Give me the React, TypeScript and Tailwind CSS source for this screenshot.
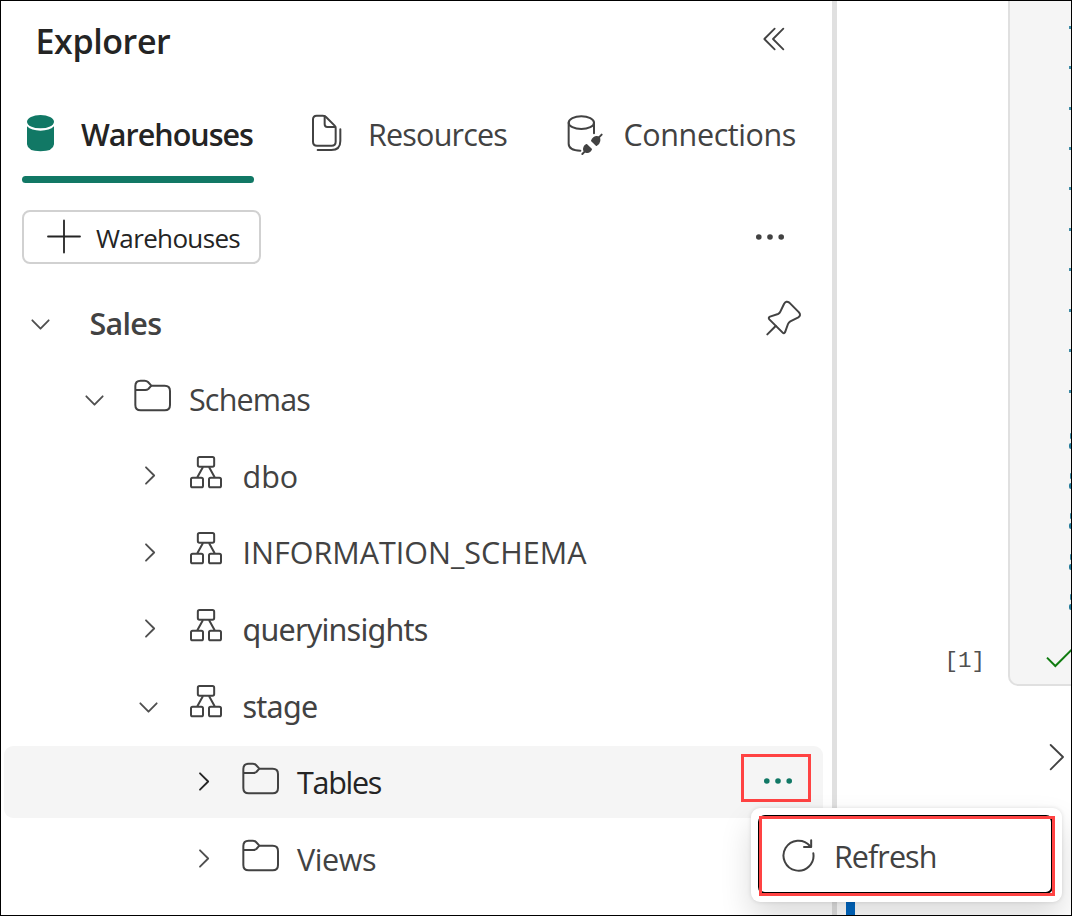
import type { ReactNode } from "react";

const OPEN = "font-['Open_Sans','Noto_Sans',sans-serif]";
const NOTO = "font-['Noto_Sans','Open_Sans',sans-serif]";

function Chevron({ open, strong }: { open?: boolean; strong?: boolean }) {
  return (
    <svg
      className={`h-[21px] w-[21px] shrink-0 ${strong ? "text-[#242424]" : "text-[#4f4f4f]"}`}
      viewBox="0 0 63 63"
      fill="none"
      stroke="currentColor"
      strokeWidth="5.5"
      strokeLinecap="round"
      strokeLinejoin="round"
    >
      {open ? <path d="M7 25 L31.5 50 L56 25" /> : <path d="M24 7 L48.5 31.5 L24 56" />}
    </svg>
  );
}

function FolderIcon() {
  return (
    <svg className="-mt-[6px] h-[34px] w-[38px] shrink-0" viewBox="401 266 114 102" fill="none" stroke="#424242" strokeWidth="6" strokeLinejoin="round">
      <path d="M405 300 V287 Q405 271 421 271 H433 Q439 271 443 275 L453 286 H493 Q509 286 509 302 V344 Q509 360 493 360 H421 Q405 360 405 344 Z" />
      <path d="M405 299 H435 Q440 299 444 296 L453 286" />
    </svg>
  );
}

function SchemaIcon() {
  return (
    <svg className="-mt-[8px] h-[34px] w-[32px] shrink-0" viewBox="572 493 96 102" fill="none" stroke="#424242" strokeWidth="6">
      <rect x="595.500" y="499" width="49" height="29" rx="5" />
      <rect x="575" y="561" width="36" height="29" rx="5" />
      <rect x="629" y="561" width="36" height="29" rx="5" />
      <path d="M611 529 L594 560 M629 529 L646 560" />
    </svg>
  );
}

function PinIcon() {
  return (
    <svg className="h-[36px] w-[36px]" viewBox="137 898 108 108" fill="none" stroke="#424242" strokeWidth="6" strokeLinecap="round" strokeLinejoin="round">
      <path d="M191 910 Q197 899 207 906 L236 935 Q243 944 234 950 L210 962 Q205 965 203 970 L194 995 Q191 1000 187 996 L147 956 Q143 951 149 948 L173 940 Q178 938 180 933 Z" />
      <path d="M166 976 L141 1001" />
    </svg>
  );
}

function Dots({ color }: { color: string }) {
  return (
    <svg className={`h-[8px] w-[30px] ${color}`} viewBox="0 0 30 8" fill="currentColor">
      <circle cx="3.800" cy="4" r="2.800" />
      <circle cx="15" cy="4" r="2.800" />
      <circle cx="26.200" cy="4" r="2.800" />
    </svg>
  );
}

type RowProps = {
  pad: string;
  open?: boolean;
  icon?: ReactNode;
  label: string;
  labelClass: string;
  selected?: boolean;
  children?: ReactNode;
};

function Row({ pad, open, icon, label, labelClass, selected, children }: RowProps) {
  return (
    <div className={`flex h-[72px] w-[819px] shrink-0 items-center rounded-[9px] ${pad} ${selected ? "bg-[#f5f5f5] text-[#242424]" : "text-[#424242]"}`}>
      <Chevron open={open} strong={selected} />
      {icon}
      <span className={`mt-px text-[30.5px] whitespace-nowrap ${labelClass}`}>{label}</span>
      {children}
    </div>
  );
}

function Tree() {
  const folder = <div className="mr-[17px] ml-[29px] flex"><FolderIcon /></div>;
  const schema = <div className="mr-[20.500px] ml-[31px] flex"><SchemaIcon /></div>;
  return (
    <div className="mt-[22.400px] ml-[3px] flex shrink-0 flex-col gap-[4.600px]">
      <Row pad="pl-[26px]" open label="Sales" labelClass={`${OPEN} ml-[38.500px] font-semibold tracking-[-0.7px]`}>
        <div className="mr-[21.500px] -mt-[9px] ml-auto"><PinIcon /></div>
      </Row>
      <Row pad="pl-[80px]" open icon={folder} label="Schemas" labelClass={`${OPEN} tracking-[-0.85px]`} />
      <Row pad="pl-[134px]" icon={schema} label="dbo" labelClass={OPEN} />
      <Row pad="pl-[134px]" icon={schema} label="INFORMATION_SCHEMA" labelClass={OPEN} />
      <Row pad="pl-[134px]" icon={schema} label="queryinsights" labelClass={`${NOTO} tracking-[-0.8px]`} />
      <Row pad="pl-[134px]" open icon={schema} label="stage" labelClass={`${NOTO} tracking-[-0.75px]`} />
      <Row pad="pl-[188px]" icon={folder} label="Tables" labelClass={`${OPEN} tracking-[-1.3px]`} selected>
        <div className="mr-[12px] mb-[8px] ml-auto flex h-[48px] w-[70px] items-center justify-center border-[3px] border-[#ff4343] pt-[7px] pl-[4px]">
          <Dots color="text-[#117865]" />
        </div>
      </Row>
      <Row pad="pl-[188px]" icon={folder} label="Views" labelClass={`${OPEN} tracking-[-0.4px]`} />
      <Row pad="pl-[188px]" icon={folder} label="" labelClass="" />
    </div>
  );
}

function Tabs() {
  return (
    <div className="mt-[19px] flex h-[83px] shrink-0 pl-[21px]">
      <div className="flex w-[232px] flex-col">
        <div className="flex h-[76px] items-center pb-[11px] text-[#242424]">
          <svg className="ml-[4px] h-[38px] w-[29px] shrink-0" viewBox="78 343 87 114" fill="#117865">
            <ellipse cx="121.500" cy="366" rx="40.500" ry="20" />
            <path d="M81 380 Q94 393 121.500 393 Q149 393 162 380 V434 Q160 455 121.500 455 Q83 455 81 434 Z" />
          </svg>
          <span className={`${OPEN} mt-[4px] ml-[26px] text-[30.5px] font-semibold tracking-[-1px] whitespace-nowrap`}>Warehouses</span>
        </div>
        <div className="h-[7px] rounded-full bg-[#117865]" />
      </div>
      <div className="ml-[57px] flex h-[76px] items-center pb-[11px] text-[#424242]">
        <svg className="mt-px h-[38px] w-[32px] shrink-0" viewBox="63 73 96 114" fill="none" stroke="#424242" strokeWidth="6" strokeLinejoin="round" strokeLinecap="round">
          <path d="M80 78 H99 Q104 78 108 82 L134 108 Q137 111 137 116 V156 Q137 168 125 168 H81 Q69 168 69 156 V89 Q69 78 80 78 Z" />
          <path d="M104 79 V104 Q104 112 112 112 H136" />
          <path d="M151 119 V154 Q151 181 124 181 H83" />
        </svg>
        <span className={`${OPEN} mt-[4px] ml-[25px] text-[30.5px] tracking-[-0.8px] whitespace-nowrap`}>Resources</span>
      </div>
      <div className="ml-auto flex h-[76px] items-center pb-[11px] text-[#424242]">
        <svg className="-mb-[4px] h-[42px] w-[38px] shrink-0" viewBox="831 71 114 126" fill="none" stroke="#424242" strokeWidth="6" strokeLinecap="round">
          <ellipse cx="874" cy="97" rx="38" ry="19" />
          <path d="M836 97 V160 Q836 180 871 181 M912 97 V129" />
          <path d="M877 191 L884 184 M935 133 L927 141" />
          <path d="M905 151 L919 165 Q928 160 929 152 Q931 139 919 139 Q909 141 905 151 Z M890 163 L904 177 Q900 187 890 186 Q881 184 881 176 Q882 166 890 163 Z" fill="#424242" strokeWidth="4" strokeLinejoin="round" />
        </svg>
        <span className={`${OPEN} mt-[4px] mr-[36px] ml-[19px] text-[30.5px] tracking-[-0.4px] whitespace-nowrap`}>Connections</span>
      </div>
    </div>
  );
}

function Explorer() {
  return (
    <aside className="flex h-full w-[831px] shrink-0 flex-col overflow-hidden bg-white">
      <header className="flex h-[80px] shrink-0 items-center justify-between pr-[45px] pl-[34.500px] text-[#242424]">
        <h1 className={`${OPEN} text-[34px] font-semibold tracking-[-0.4px]`}>Explorer</h1>
        <svg className="-mt-[4px] h-[26px] w-[26px]" viewBox="123 78 78 78" fill="none" stroke="#424242" strokeWidth="5.500" strokeLinecap="round" strokeLinejoin="round">
          <path d="M164 86 L133 117 L164 148 M190 86 L159 117 L190 148" />
        </svg>
      </header>
      <Tabs />
      <div className="mt-[27px] flex h-[54px] shrink-0 items-center pr-[47.500px] pl-[21px]">
        <button className="flex h-[54px] w-[239px] items-center rounded-[8px] border-2 border-[#d1d1d1] bg-white text-[#242424]">
          <svg className="ml-[22px] h-[36px] w-[36px] shrink-0" viewBox="0 0 36 36" stroke="#242424" strokeWidth="1.800" strokeLinecap="round">
            <path d="M18 1.500 V33.500 M2 17.500 H34" />
          </svg>
          <span className={`${OPEN} mt-[2px] ml-[14px] text-[26px] tracking-[-0.65px] whitespace-nowrap`}>Warehouses</span>
        </button>
        <div className="ml-auto flex"><Dots color="text-[#424242]" /></div>
      </div>
      <Tree />
    </aside>
  );
}

const ones = Array.from({ length: 10 }, (_, i) => i);
const eights = Array.from({ length: 5 }, (_, i) => i);

function Notebook() {
  return (
    <main className="flex h-full flex-1 flex-col overflow-hidden bg-white">
      <div className="flex h-[685px] shrink-0">
        <div className="flex w-[171px] items-end justify-end pr-[23px] pb-[14px]">
          <span className="font-['Liberation_Mono',monospace] text-[22.5px] text-[#505050]">[1]</span>
        </div>
        <div className="flex flex-1 flex-col rounded-bl-[10px] border-b-2 border-l-2 border-[#e0e0e0] bg-[#f5f5f5]">
          <div className="flex h-[646px] shrink-0 flex-col items-end overflow-hidden pt-[6px]">
            {ones.map((i) => (
              <div key={i} className="flex h-[40.440px] w-[2px] shrink-0 items-center">
                <div className="h-[3px] w-[2px] bg-[#3e8ba6]" />
              </div>
            ))}
            {eights.map((i) => (
              <div key={i} className="flex h-[40.440px] w-[2px] shrink-0 flex-col items-end justify-center gap-[4px] pt-[18px]">
                <div className="h-[6px] w-[1px] rounded-l-full bg-[#3e8ba6]" />
                <div className="h-[6px] w-[2px] rounded-l-full bg-[#267c9b]" />
              </div>
            ))}
          </div>
          <svg className="ml-auto h-[22px] w-[27px] shrink-0" viewBox="336 800 81 66" fill="none" stroke="#107c10" strokeWidth="6">
            <path d="M345 832 L370 857 L420 807" />
          </svg>
        </div>
      </div>
      <div className="mt-[56px] flex shrink-0 justify-end pr-[5px]">
        <svg className="h-[30px] w-[18px]" viewBox="978 20 54 90" fill="none" stroke="#424242" strokeWidth="5.500" strokeLinecap="round" strokeLinejoin="round">
          <path d="M986 29 L1023 65 L986 102" />
        </svg>
      </div>
      <div className="mt-auto ml-[9px] h-[20px] w-[9px] bg-[#0067c0]" />
    </main>
  );
}

function ContextMenu() {
  return (
    <div className="absolute top-[807px] left-[750px] h-[94px] w-[311px] rounded-[9px] bg-white p-[7px] shadow-[0_0_4px_rgba(0,0,0,0.12),0_16px_32px_rgba(0,0,0,0.14)]">
      <div className="relative flex h-[79px] w-[295px] items-center rounded-[7px] border-2 border-black text-[#424242]">
        <svg className="ml-[21px] h-[36px] w-[36px] shrink-0" viewBox="177 304 108 108" fill="none" stroke="#424242" strokeWidth="6" strokeLinecap="round" strokeLinejoin="round">
          <path d="M274 353 A45 45 0 1 1 264 331" />
          <path d="M267.500 314 V334 H246" />
        </svg>
        <span className={`${OPEN} mt-[4px] ml-[17px] text-[30.5px] tracking-[-0.95px] whitespace-nowrap`}>Refresh</span>
        <div className="absolute -top-px -left-px h-[80px] w-[296px] border-[3px] border-[#ff4343]" />
      </div>
    </div>
  );
}

export default function App() {
  return (
    <div className="relative flex h-[916px] w-[1072px] overflow-hidden border border-black bg-white leading-none">
      <Explorer />
      <div className="w-[5px] shrink-0 bg-[#e0e0e0]" />
      <Notebook />
      <ContextMenu />
    </div>
  );
}
